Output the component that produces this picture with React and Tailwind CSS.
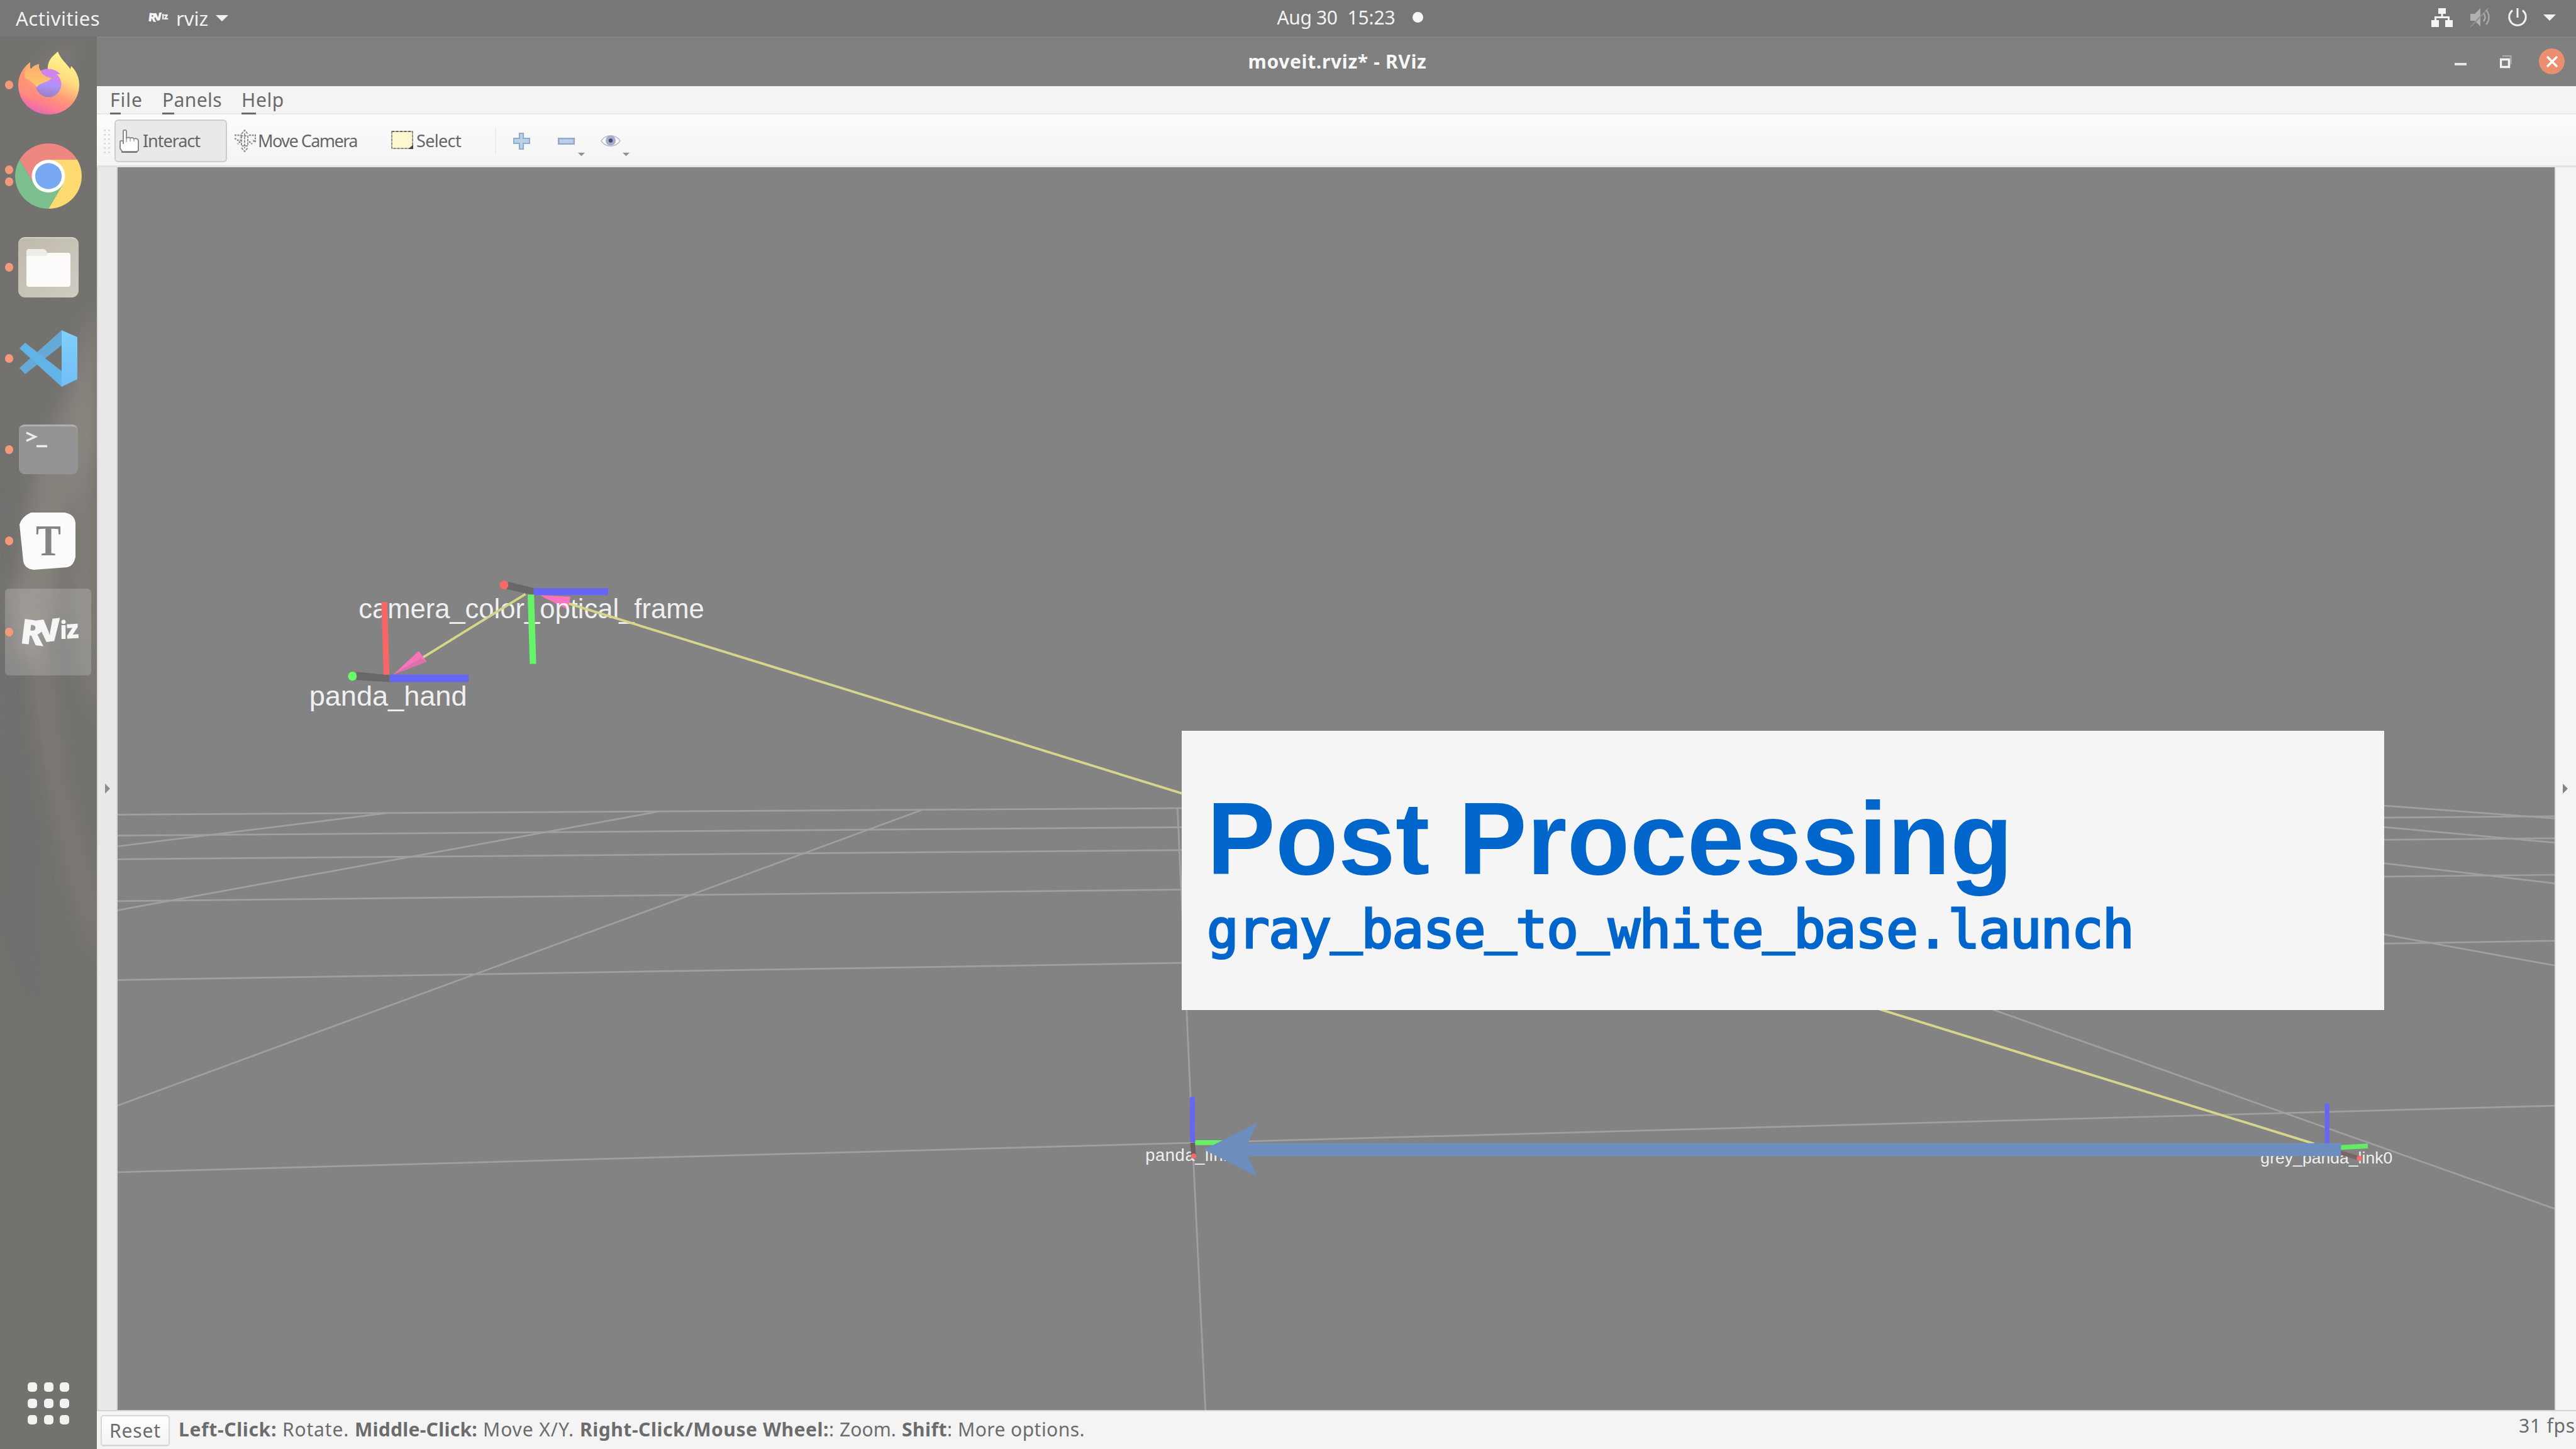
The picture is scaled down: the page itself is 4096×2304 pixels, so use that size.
import React, { useLayoutEffect, useRef, useState } from "react";

/* Text tracked so that it takes exactly `w` pixels. */
function Fit({ w, className = "", children }) {
  const ref = useRef(null);
  const [spacing, setSpacing] = useState(0);
  useLayoutEffect(() => {
    const el = ref.current;
    el.style.letterSpacing = "0px";
    const natural = el.getBoundingClientRect().width;
    const s = (w - natural) / el.textContent.length;
    el.style.letterSpacing = s + "px";
    setSpacing(s);
  }, [w]);
  return (
    <span ref={ref} className={"inline-block shrink-0 whitespace-pre " + className} style={{ letterSpacing: spacing + "px" }}>
      {children}
    </span>
  );
}

function RvizMark({ className }) {
  return (
    <svg className={"overflow-visible " + className} viewBox="0 0 94 60" fill="#f6f6f6" fontFamily="'Open Sans','Noto Sans',sans-serif" fontWeight="800">
      <text x="1" y="49" fontSize="55" textLength="38" lengthAdjust="spacingAndGlyphs" transform="rotate(7 10 40)">R</text>
      <text x="29" y="45" fontSize="50" textLength="38" lengthAdjust="spacingAndGlyphs" transform="rotate(-6 50 30)">V</text>
      <text x="65" y="41" fontSize="38" textLength="11" lengthAdjust="spacingAndGlyphs">i</text>
      <text x="75" y="40" fontSize="41" textLength="20" lengthAdjust="spacingAndGlyphs" transform="rotate(-3 85 30)">z</text>
    </svg>
  );
}

function Caret({ className }) {
  return (
    <svg className={className} viewBox="0 0 20 10">
      <path d="M0 0H20L10 10Z" fill="currentColor" />
    </svg>
  );
}

function TopBar() {
  return (
    <header className="flex h-[58px] w-full items-center bg-[#777777] text-[31px] leading-[58px] text-[#f2f2f2]">
      <div className="flex flex-1 items-center pl-[25px]">
        <Fit w={134}>Activities</Fit>
        <RvizMark className="-mt-[4px] ml-[76px] h-[21px] w-[32px]" />
        <Fit w={51} className="ml-[13px]">rviz</Fit>
        <Caret className="ml-[12px] h-[10px] w-[20px]" />
      </div>
      <div className="ml-[204px] flex items-center pb-[3px] text-[30px]">
        <Fit w={96}>Aug 30</Fit>
        <Fit w={76} className="ml-[16px]">15:23</Fit>
        <span className="ml-[27px] h-[17px] w-[17px] rounded-full bg-[#f6f6f6]" />
      </div>
      <div className="flex flex-1 items-center justify-end pr-[32px] pb-[3px]">
        <svg className="h-[30px] w-[34px]" viewBox="0 0 34 30">
          <path d="M11 0h12v9h-4.500v4H29v6h5v11H22V19h4v-3H8v3h4v11H0V19h5v-6h10.500V9H11Z" fill="#f4f4f4" />
        </svg>
        <svg className="ml-[27px] h-[32px] w-[32px]" viewBox="0 0 32 32" fill="none" stroke="#a8a8a8" strokeWidth="2.500">
          <path d="M1 10h7l9-9v29l-9-9H1Z" fill="#b0b0b0" stroke="none" />
          <path d="M1 31L30 1" strokeWidth="2" stroke="#8f8f8f" />
          <path d="M22 9c3 4 3 9 0 13M26 4c6 7 6 16 0 23" />
        </svg>
        <svg className="ml-[29px] h-[30px] w-[30px]" viewBox="0 0 30 30" fill="none" stroke="#f0f0f0" strokeWidth="3">
          <path d="M7 3.500A13.200 13.200 0 1 0 23 3.500M15 0V15" />
        </svg>
        <Caret className="ml-[26px] h-[10px] w-[20px]" />
      </div>
    </header>
  );
}

function TitleBar() {
  return (
    <div className="flex h-[79px] items-center border-t-2 border-[#858585] bg-[#808080]">
      <div className="flex-1" />
      <Fit w={284} className="-mt-[2px] ml-[21px] text-[30px] leading-[60px] font-bold text-[#f7f7f7]">moveit.rviz* - RViz</Fit>
      <div className="flex flex-1 items-center justify-end pr-[18px] pb-[2px]">
        <span className="mt-[9px] h-[4px] w-[19px] bg-[#e6e6e6]" />
        <svg className="ml-[53px] h-[22px] w-[19px]" viewBox="0 0 19 22" fill="none">
          <path d="M1.500 7.500h13v12h-13z" stroke="#f2f2f2" strokeWidth="3.500" />
          <path d="M4 2h13.500v13" stroke="#b0b0b0" strokeWidth="2" />
        </svg>
        <span className="ml-[43px] flex h-[41px] w-[41px] items-center justify-center rounded-full bg-[#eb8f70]">
          <svg className="h-[18px] w-[18px]" viewBox="0 0 18 18" stroke="#fff" strokeWidth="3.500">
            <path d="M1 1L17 17M17 1L1 17" />
          </svg>
        </span>
      </div>
    </div>
  );
}

function Menu({ first, rest, w }) {
  return (
    <Fit w={w}>
      <span className="border-b-3 border-[#6c6c6c]">{first}</span>
      {rest}
    </Fit>
  );
}

function MenuBar() {
  return (
    <nav className="flex h-[45px] items-center gap-[31px] border-b-2 border-[#e8e8e8] bg-[#f4f4f4] pl-[21px] text-[30px] leading-[30px] text-[#6a6a6a]">
      <Menu first="F" rest="ile" w={52} />
      <Menu first="P" rest="anels" w={95} />
      <Menu first="H" rest="elp" w={68} />
    </nav>
  );
}

function Toolbar() {
  return (
    <div className="flex h-[84px] items-center border-b-3 border-[#e2e2e2] bg-linear-to-b from-[#fcfcfc] to-[#f4f4f4] pt-[3px] text-[27px] leading-[34px] text-[#666666]">
      <svg className="ml-[11px] h-[40px] w-[10px]" viewBox="0 0 10 40" fill="#dadada">
        {[2, 9, 16, 23, 30, 37].map((y) => (
          <g key={y}>
            <rect x="0" y={y} width="3" height="2.500" />
            <rect x="7" y={y} width="3" height="2.500" />
          </g>
        ))}
      </svg>
      <div className="ml-[7px] flex h-[68px] w-[179px] items-center rounded-[6px] border-2 border-[#cccccc] bg-[#e9e9e9] pl-[5px]">
        <svg className="h-[38px] w-[33px]" viewBox="0 0 33 38">
          <path d="M7 24V4c0-3 5-3 5 0v11c2-2 5-2 6 0c2-2 5-1 6 1c3-2 7 0 7 3v15l-3 3H6l-4-6V21c0-3 5-3 5 0Z" fill="#fff" stroke="#8c8c8c" strokeWidth="2" />
          <path d="M12 15v6M18 15v5M24 16v4" stroke="#a8a8a8" strokeWidth="1.500" />
          <path d="M4 36.500H29" stroke="#777" strokeWidth="2.500" />
        </svg>
        <Fit w={91} className="ml-[5px]">Interact</Fit>
      </div>
      <svg className="ml-[11px] h-[36px] w-[35px]" viewBox="0 0 35 36" fill="none" stroke="#929292" strokeWidth="2">
        <path d="M12 7L17 1L22 7M12 29L17 35L22 29M17 6v24M12 10v16h10V10Z" strokeDasharray="4 1.500" />
        <path d="M1 9h10v5M24 9h10v11l-5-4M1 14l5 3h5M10 19l-4 4M24 19l5 4" strokeWidth="2.500" stroke="#8f8f8f" strokeDasharray="3 1.500" />
      </svg>
      <Fit w={158} className="ml-[3px]">Move Camera</Fit>
      <svg className="-mt-[3px] ml-[54px] h-[30px] w-[36px]" viewBox="0 0 36 30">
        <rect x="1" y="1" width="33" height="27" fill="#fdf7cf" stroke="#bdbba8" strokeWidth="2" />
        <path d="M1 1H34" stroke="#666" strokeWidth="2" strokeDasharray="4 2.500" />
        <path d="M1 1V28H34V1" fill="none" stroke="#8a8a80" strokeWidth="2" strokeDasharray="3 3" />
        <path d="M35 22v7h-8Z" fill="#444" />
      </svg>
      <Fit w={71} className="ml-[4px]">Select</Fit>
      <span className="ml-[54px] h-[42px] w-[2px] bg-[#ececec]" />
      <svg className="ml-[27px] h-[27px] w-[27px]" viewBox="0 0 27 27">
        <path d="M10 1h6v8h10v8H16v9h-6v-9H1V9h9Z" fill="#bdd0e5" stroke="#8eabd0" strokeWidth="2.200" />
      </svg>
      <svg className="ml-[44px] h-[11px] w-[27px]" viewBox="0 0 27 11">
        <rect x="1.200" y="1.200" width="24.600" height="8.600" fill="#bdd0e5" stroke="#8eabd0" strokeWidth="2.400" />
      </svg>
      <Caret className="mt-[43px] ml-[5px] h-[7px] w-[11px] text-[#909090]" />
      <svg className="ml-[25px] h-[22px] w-[32px]" viewBox="0 0 32 22">
        <path d="M1 11C8 0 24 0 31 11C24 22 8 22 1 11Z" fill="#fbfbfb" stroke="#bdbdbd" strokeWidth="1.500" />
        <circle cx="16" cy="10.500" r="8" fill="#a3aed2" />
        <circle cx="16" cy="10.500" r="3.200" fill="#4a4f66" />
      </svg>
      <Caret className="mt-[43px] ml-[3px] h-[7px] w-[11px] text-[#909090]" />
    </div>
  );
}

function Firefox() {
  return (
    <svg className="-mt-[5px] h-[100px] w-[97px]" viewBox="0 0 97 100">
      <defs>
        <linearGradient id="fxBody" x1="0.75" y1="0.05" x2="0.35" y2="1">
          <stop offset="0" stopColor="#fff68f" />
          <stop offset="0.35" stopColor="#ffdd80" />
          <stop offset="0.62" stopColor="#ff9c78" />
          <stop offset="0.82" stopColor="#ff7f8c" />
          <stop offset="1" stopColor="#e566b8" />
        </linearGradient>
        <linearGradient id="fxBall" x1="0.6" y1="0" x2="0.4" y2="1">
          <stop offset="0" stopColor="#dc80ee" />
          <stop offset="0.5" stopColor="#ae92fa" />
          <stop offset="1" stopColor="#9880c2" />
        </linearGradient>
        <linearGradient id="fxFlame" x1="0" y1="0" x2="0" y2="1">
          <stop offset="0" stopColor="#fcab70" />
          <stop offset="1" stopColor="#fec76c" />
        </linearGradient>
        <linearGradient id="fxLeft" x1="0" y1="0" x2="1" y2="0">
          <stop offset="0" stopColor="#ff8f74" />
          <stop offset="1" stopColor="#ff8f74" stopOpacity="0" />
        </linearGradient>
      </defs>
      <path d="M19 17C18 22 19 26 20 28C24 23 28 21 33 20C32 25 34 29 36 31L47 29C46 14 55 7 63 0C67 12 78 20 83 28L84 23C92 30 97 41 97 53C97 80 75 100 49 100C22 100 0 80 0 53C0 38 8 25 19 17Z" fill="url(#fxBody)" />
      <path d="M19 17C18 22 19 26 20 28L36 40V78C18 80 4 70 1 58C-1 40 8 25 19 17Z" fill="url(#fxLeft)" />
      <circle cx="48" cy="52" r="20.500" fill="url(#fxBall)" />
      <path d="M33 32C42 25 58 26 67 36H61C66 42 67 48 66 54C60 42 50 40 33 42Z" fill="#cf84ee" />
      <path d="M19 17C18 22 19 26 20 28C24 23 28 21 33 20C32 25 34 29 36 31C38 38 46 41 53 42C49 49 36 48 29 57C27 50 18 46 11 42C8 35 12 24 19 17Z" fill="url(#fxFlame)" />
    </svg>
  );
}

function Chrome() {
  return (
    <svg className="h-[104px] w-[106px]" viewBox="-52 -52 104 104" preserveAspectRatio="none">
      <path d="M-45-26A52 52 0 0 1 45-26L0-26L-22.500 13Z" fill="#ed8780" />
      <path d="M0-26H45A52 52 0 0 1 0 52L22.500 13Z" fill="#fddb70" />
      <path d="M-45-26L-22.500 13H22.500L0 52A52 52 0 0 1-45-26Z" fill="#7cc08f" />
      <circle r="26" fill="#fff" />
      <circle r="20.700" fill="#78a9f0" />
    </svg>
  );
}

function Files() {
  return (
    <div className="flex h-[96px] w-[96px] items-center justify-center rounded-[11px] border-t-2 border-[#d6d3c9] bg-linear-to-br from-[#bfb9ab] to-[#cfccc2]">
      <svg className="h-[62px] w-[70px]" viewBox="0 0 70 62">
        <path d="M0 16V5Q0 1 4 1H27Q31 1 33 7H40V16Z" fill="#edece6" />
        <path d="M0 12H31L35 7H66Q70 7 70 11V57Q70 61 66 61H4Q0 61 0 57Z" fill="#fcfbf9" />
      </svg>
    </div>
  );
}

function VsCode() {
  return (
    <svg className="h-[90px] w-[92px]" viewBox="0 0 92 90">
      <defs>
        <linearGradient id="vsSlab" x1="0" y1="0" x2="0" y2="1">
          <stop offset="0" stopColor="#7fd0fb" />
          <stop offset="1" stopColor="#74bdf7" />
        </linearGradient>
      </defs>
      <path d="M0 60L67 0V24L9 70Z" fill="#66a9d6" />
      <path d="M0 29L9 20L67 65V90Z" fill="#62b4e6" />
      <path d="M67 0L92 11V78L67 90Z" fill="url(#vsSlab)" />
    </svg>
  );
}

function Terminal() {
  return (
    <div className="h-[79px] w-[94px] rounded-[9px] border-t-3 border-[#b0b0ae] bg-[#949494] pt-[8px] pl-[11px]">
      <svg className="h-[28px] w-[36px]" viewBox="0 0 36 28" fill="none" stroke="#ececec" strokeWidth="3.500">
        <path d="M1 2L15 8.500L1 15M17 23.500H34" />
      </svg>
    </div>
  );
}

function Typora() {
  return (
    <svg className="-ml-[4px] h-[92px] w-[89px]" viewBox="0 0 89 92">
      <path d="M18 1H72Q88 4 89 18V72Q86 86 76 88L22 92Q8 90 6 78L0 20Q3 8 18 1Z" fill="#fbfbfb" />
      <text x="46" y="69" textAnchor="middle" fontFamily="'Liberation Serif',serif" fontWeight="700" fontSize="70" fill="#838383" textLength="40" lengthAdjust="spacingAndGlyphs">T</text>
    </svg>
  );
}

function DockItem({ dots = 1, active = false, children }) {
  return (
    <div className="flex h-[145px] w-full items-center">
      <div className={"ml-[8px] flex h-[138px] w-[137px] items-center rounded-[6px] " + (active ? "bg-white/18" : "")}>
        <div className="flex w-[13px] flex-col gap-[5px]">
          {Array.from({ length: dots }, (_, i) => (
            <span key={i} className="h-[14px] w-[13px] rounded-full bg-[#f4997a]" />
          ))}
        </div>
        <div className="ml-[1px] flex w-[110px] items-center justify-center">{children}</div>
      </div>
    </div>
  );
}

function Dock() {
  return (
    <aside className="relative flex h-full w-[154px] flex-col overflow-hidden bg-[#74726f] pt-[4px]">
      <svg className="absolute inset-0 h-full w-full" viewBox="0 0 154 2246" preserveAspectRatio="none">
        <defs>
          <filter id="soft" x="-50%" y="-10%" width="200%" height="120%"><feGaussianBlur stdDeviation="14" /></filter>
        </defs>
        <g filter="url(#soft)" fill="#a39a92">
          <path d="M150 420L110 560L60 680L30 850L20 980L60 1000L90 900L100 780L154 640Z" opacity="0.38" />
          <path d="M154 480L120 720L115 900L130 1000L154 1100Z" opacity="0.3" />
          <path d="M0 880L50 980L60 1100L110 1330L154 1480V1380L100 1180L80 1000L30 860Z" opacity="0.22" />
          <path d="M60 40L130 10L110 40L70 60Z" opacity="0.3" />
        </g>
        <path d="M0 420V1400L60 1560V1300L10 900Z" fill="#6a6a6e" opacity="0.2" filter="url(#soft)" />
      </svg>
      <div className="relative flex flex-1 flex-col">
        <DockItem><Firefox /></DockItem>
        <DockItem dots={2}><Chrome /></DockItem>
        <DockItem><Files /></DockItem>
        <DockItem><VsCode /></DockItem>
        <DockItem><Terminal /></DockItem>
        <DockItem><Typora /></DockItem>
        <DockItem active><RvizMark className="h-[60px] w-[95px]" /></DockItem>
        <div className="mt-auto mb-[39px] ml-[44px] grid w-[66px] grid-cols-3 gap-x-[11px] gap-y-[11px]">
          {Array.from({ length: 9 }, (_, i) => (
            <span key={i} className="h-[15px] w-[15px] rounded-[5px] bg-[#f2f2f1]" />
          ))}
        </div>
      </div>
    </aside>
  );
}

const GRID = [
  [219, 1518, 3500, 1498], [219, 1557, 4760, 1521], [219, 1601, 4760, 1562],
  [219, 1679, 4760, 1630], [219, 1826, 4760, 1753], [219, 2184, 4760, 2060],
  [720, 1515, 219, 1577], [1228, 1512, 219, 1696], [1718, 1509, 219, 2060],
  [4200, 1483, 4760, 1525], [4200, 1519, 4760, 1570], [4200, 1580, 4760, 1646],
  [4200, 1697, 4760, 1799], [3600, 1841, 4760, 2252],
  [2194, 1506, 2222, 2129], [2222, 2129, 2246, 2627],
];

/* The 3D view: ground grid, frame axes, transform links and labels. */
function Scene() {
  return (
    <svg className="block h-[1976px] w-[3875px] bg-[#838383]" viewBox="219 312 4541 2315" preserveAspectRatio="none" fontFamily="'Liberation Sans',Arial,sans-serif" fill="#f0f0f0">
      <g stroke="#a0a0a0" strokeWidth="3.200">
        {GRID.map(([x1, y1, x2, y2]) => (
          <line key={x1 + "-" + y1 + "-" + y2} x1={x1} y1={y1} x2={x2} y2={y2} />
        ))}
      </g>

      <path d="M1005 1109L1063 1112L1058 1136Z" fill="#fb72bd" />
      <text x="668" y="1152" fontSize="51" textLength="644" lengthAdjust="spacingAndGlyphs">camera_color_optical_frame</text>
      <text x="576" y="1315" fontSize="52" textLength="294" lengthAdjust="spacingAndGlyphs">panda_hand</text>
      <text x="2134" y="2163" fontSize="32" textLength="180">panda_link0</text>
      <text x="4212" y="2168" fontSize="31" textLength="246">grey_panda_link0</text>

      <g stroke="#d5d58b" strokeWidth="4.500">
        <line x1="979" y1="1107" x2="788" y2="1225" />
        <line x1="1060" y1="1125" x2="4312" y2="2131" />
      </g>

      <path d="M947 1084L996 1096V1109L944 1098Z" fill="#686868" />
      <ellipse cx="939" cy="1090" rx="8" ry="8" fill="#ff6666" />
      <rect x="994" y="1096" width="139" height="13" fill="#6666f5" />
      <path d="M989 1108L993 1237" stroke="#66f566" strokeWidth="12" />

      <path d="M733 1257L780 1213L795 1233Z" fill="#f873bc" />
      <path d="M784 1226L795 1233L733 1257Z" fill="#dc70ab" />
      <path d="M664 1252L726 1258V1271L664 1267Z" fill="#686868" />
      <ellipse cx="656.500" cy="1260" rx="8" ry="8.500" fill="#66ff66" />
      <path d="M716 1122L720 1257" stroke="#fa6666" strokeWidth="11" />
      <rect x="726" y="1257" width="147" height="14" fill="#6666f5" />

      <path d="M2222 2129L2224 2152" stroke="#6c5e5e" strokeWidth="9" />
      <circle cx="2224" cy="2154" r="5" fill="#f56a6a" />
      <path d="M2227 2129H2290" stroke="#66f066" strokeWidth="9" />
      <path d="M2221.500 2044L2222 2128" stroke="#6666f0" strokeWidth="9" />

      <path d="M4340 2141L4396 2158" stroke="#7a6464" strokeWidth="8" />
      <circle cx="4396" cy="2158" r="5" fill="#f56a6a" />
      <path d="M4340 2139L4412 2135" stroke="#66ea66" strokeWidth="9" />
      <path d="M4336 2056V2138" stroke="#6666f0" strokeWidth="8.500" />

      <path d="M2243 2142L2343 2092L2325 2130H4362V2154H2325L2343 2192Z" fill="#6c8ebf" />
    </svg>
  );
}

function Under() {
  return <span className="relative -top-[9px]">_</span>;
}

function Callout() {
  return (
    <div className="absolute top-[896px] left-[1692px] h-[444px] w-[1912px] bg-[#f5f5f5] pt-[78px] pl-[40px] text-[#0066cc]">
      <h1 className="font-['Liberation_Sans',Arial,sans-serif] text-[163px] leading-[188px] font-bold whitespace-nowrap">
        <Fit w={1282}>Post Processing</Fit>
      </h1>
      <p className="mt-[0px] font-['DejaVu_Sans_Mono',monospace] text-[84px] leading-[100px] whitespace-nowrap [-webkit-text-stroke:3.2px_#0066cc]">
        <Fit w={1473}>
          gray<Under />base<Under />to<Under />white<Under />base.launch
        </Fit>
      </p>
    </div>
  );
}

function StatusBar() {
  return (
    <footer className="flex h-[62px] items-center overflow-hidden border-t-2 border-[#d5d5d5] bg-[#f4f4f4] text-[30px] leading-[34px] text-[#6c6c6c]">
      <div className="mt-[2px] ml-[6px] flex h-[50px] w-[110px] items-center justify-center rounded-[5px] border-2 border-b-3 border-[#d8d8d8] bg-linear-to-b from-white to-[#f4f4f4]">
        <Fit w={82}>Reset</Fit>
      </div>
      <div className="-mt-[2px] ml-[14px] flex items-center gap-[9px]">
        <Fit w={156} className="font-bold">Left-Click:</Fit>
        <Fit w={106}>Rotate.</Fit>
        <Fit w={195} className="font-bold">Middle-Click:</Fit>
        <Fit w={145}>Move X/Y.</Fit>
        <span className="flex">
          <Fit w={396} className="font-bold">Right-Click/Mouse Wheel:</Fit>
          <Fit w={8}>:</Fit>
        </span>
        <Fit w={90}>Zoom.</Fit>
        <span className="flex">
          <Fit w={72} className="font-bold">Shift</Fit>
          <Fit w={8}>:</Fit>
        </span>
        <Fit w={202}>More options.</Fit>
      </div>
      <Fit w={90} className="mr-[1px] mb-[14px] ml-auto">31 fps</Fit>
    </footer>
  );
}

function Splitter({ className, side }) {
  return (
    <div className={"flex items-center justify-center " + className}>
      <svg className="h-[16px] w-[9px]" viewBox="0 0 9 16">
        <path d="M1 0L9 8L1 16Z" fill={side === "left" ? "#8c8c8c" : "#858585"} />
      </svg>
    </div>
  );
}

export default function App() {
  return (
    <div className="flex h-[2304px] w-[4096px] flex-col overflow-hidden bg-[#838383] font-['Noto_Sans',sans-serif]">
      <TopBar />
      <div className="flex h-[2246px]">
        <Dock />
        <main className="flex w-[3942px] flex-col">
          <TitleBar />
          <MenuBar />
          <Toolbar />
          <div className="flex h-[1976px]">
            <Splitter side="left" className="w-[33px] border-x-2 border-[#d9d9d9] bg-[#e9e9e9]" />
            <div className="relative w-[3875px]">
              <Scene />
              <Callout />
            </div>
            <Splitter side="right" className="w-[34px] border-l-2 border-[#dddddd] bg-[#f4f4f4] pr-[3px]" />
          </div>
          <StatusBar />
        </main>
      </div>
    </div>
  );
}
